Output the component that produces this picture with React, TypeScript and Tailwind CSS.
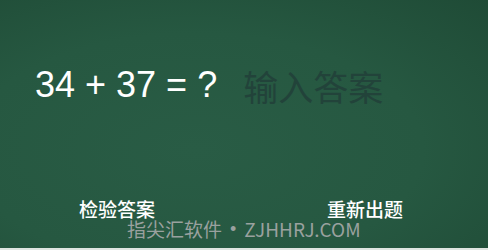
import { useState } from "react";

const App = () => {
  const [answer, setAnswer] = useState("");

  return (
    <div className="relative w-[488px] h-[250px] overflow-hidden flex flex-col bg-[radial-gradient(ellipse_at_40%_60%,#295c45_0%,#265841_55%,#1f4b36_100%)] font-['Liberation_Sans','Noto_Sans_CJK_SC',sans-serif]">
      <div className="flex-1 flex flex-col">
        {/* equation row */}
        <div className="flex items-center pl-[35px] pt-[62px] h-[108px]">
          <span className="text-[36px] leading-none text-white whitespace-pre">34 + 37 = ?</span>
          <input
            value={answer}
            onChange={(e) => setAnswer(e.target.value)}
            placeholder="输入答案"
            className="ml-[26px] w-[160px] bg-transparent outline-none text-[35px] leading-none text-white placeholder:text-[#22433a] font-['Noto_Sans_CJK_SC',sans-serif]"
          />
        </div>

        {/* buttons */}
        <div className="mt-[91px] flex justify-between pl-[79px] pr-[85px]">
          <button className="text-[19px] leading-none font-medium text-white font-['Noto_Sans_CJK_SC',sans-serif]">检验答案</button>
          <button className="text-[19px] leading-none font-medium text-white font-['Noto_Sans_CJK_SC',sans-serif]">重新出题</button>
        </div>
      </div>
      <div className="h-[2px] bg-[#dfe5e1]" />

      {/* watermark */}
      <div className="absolute left-[127px] top-[219px] flex items-center text-[19px] leading-none text-[#9aa19f] font-['Noto_Sans_CJK_SC',sans-serif] whitespace-nowrap">
        <span>指尖汇软件</span>
        <span className="mx-[8px] text-[18px] font-['Liberation_Sans',sans-serif]">•</span>
        <span>ZJHHRJ.COM</span>
      </div>
    </div>
  );
};

export default App;
